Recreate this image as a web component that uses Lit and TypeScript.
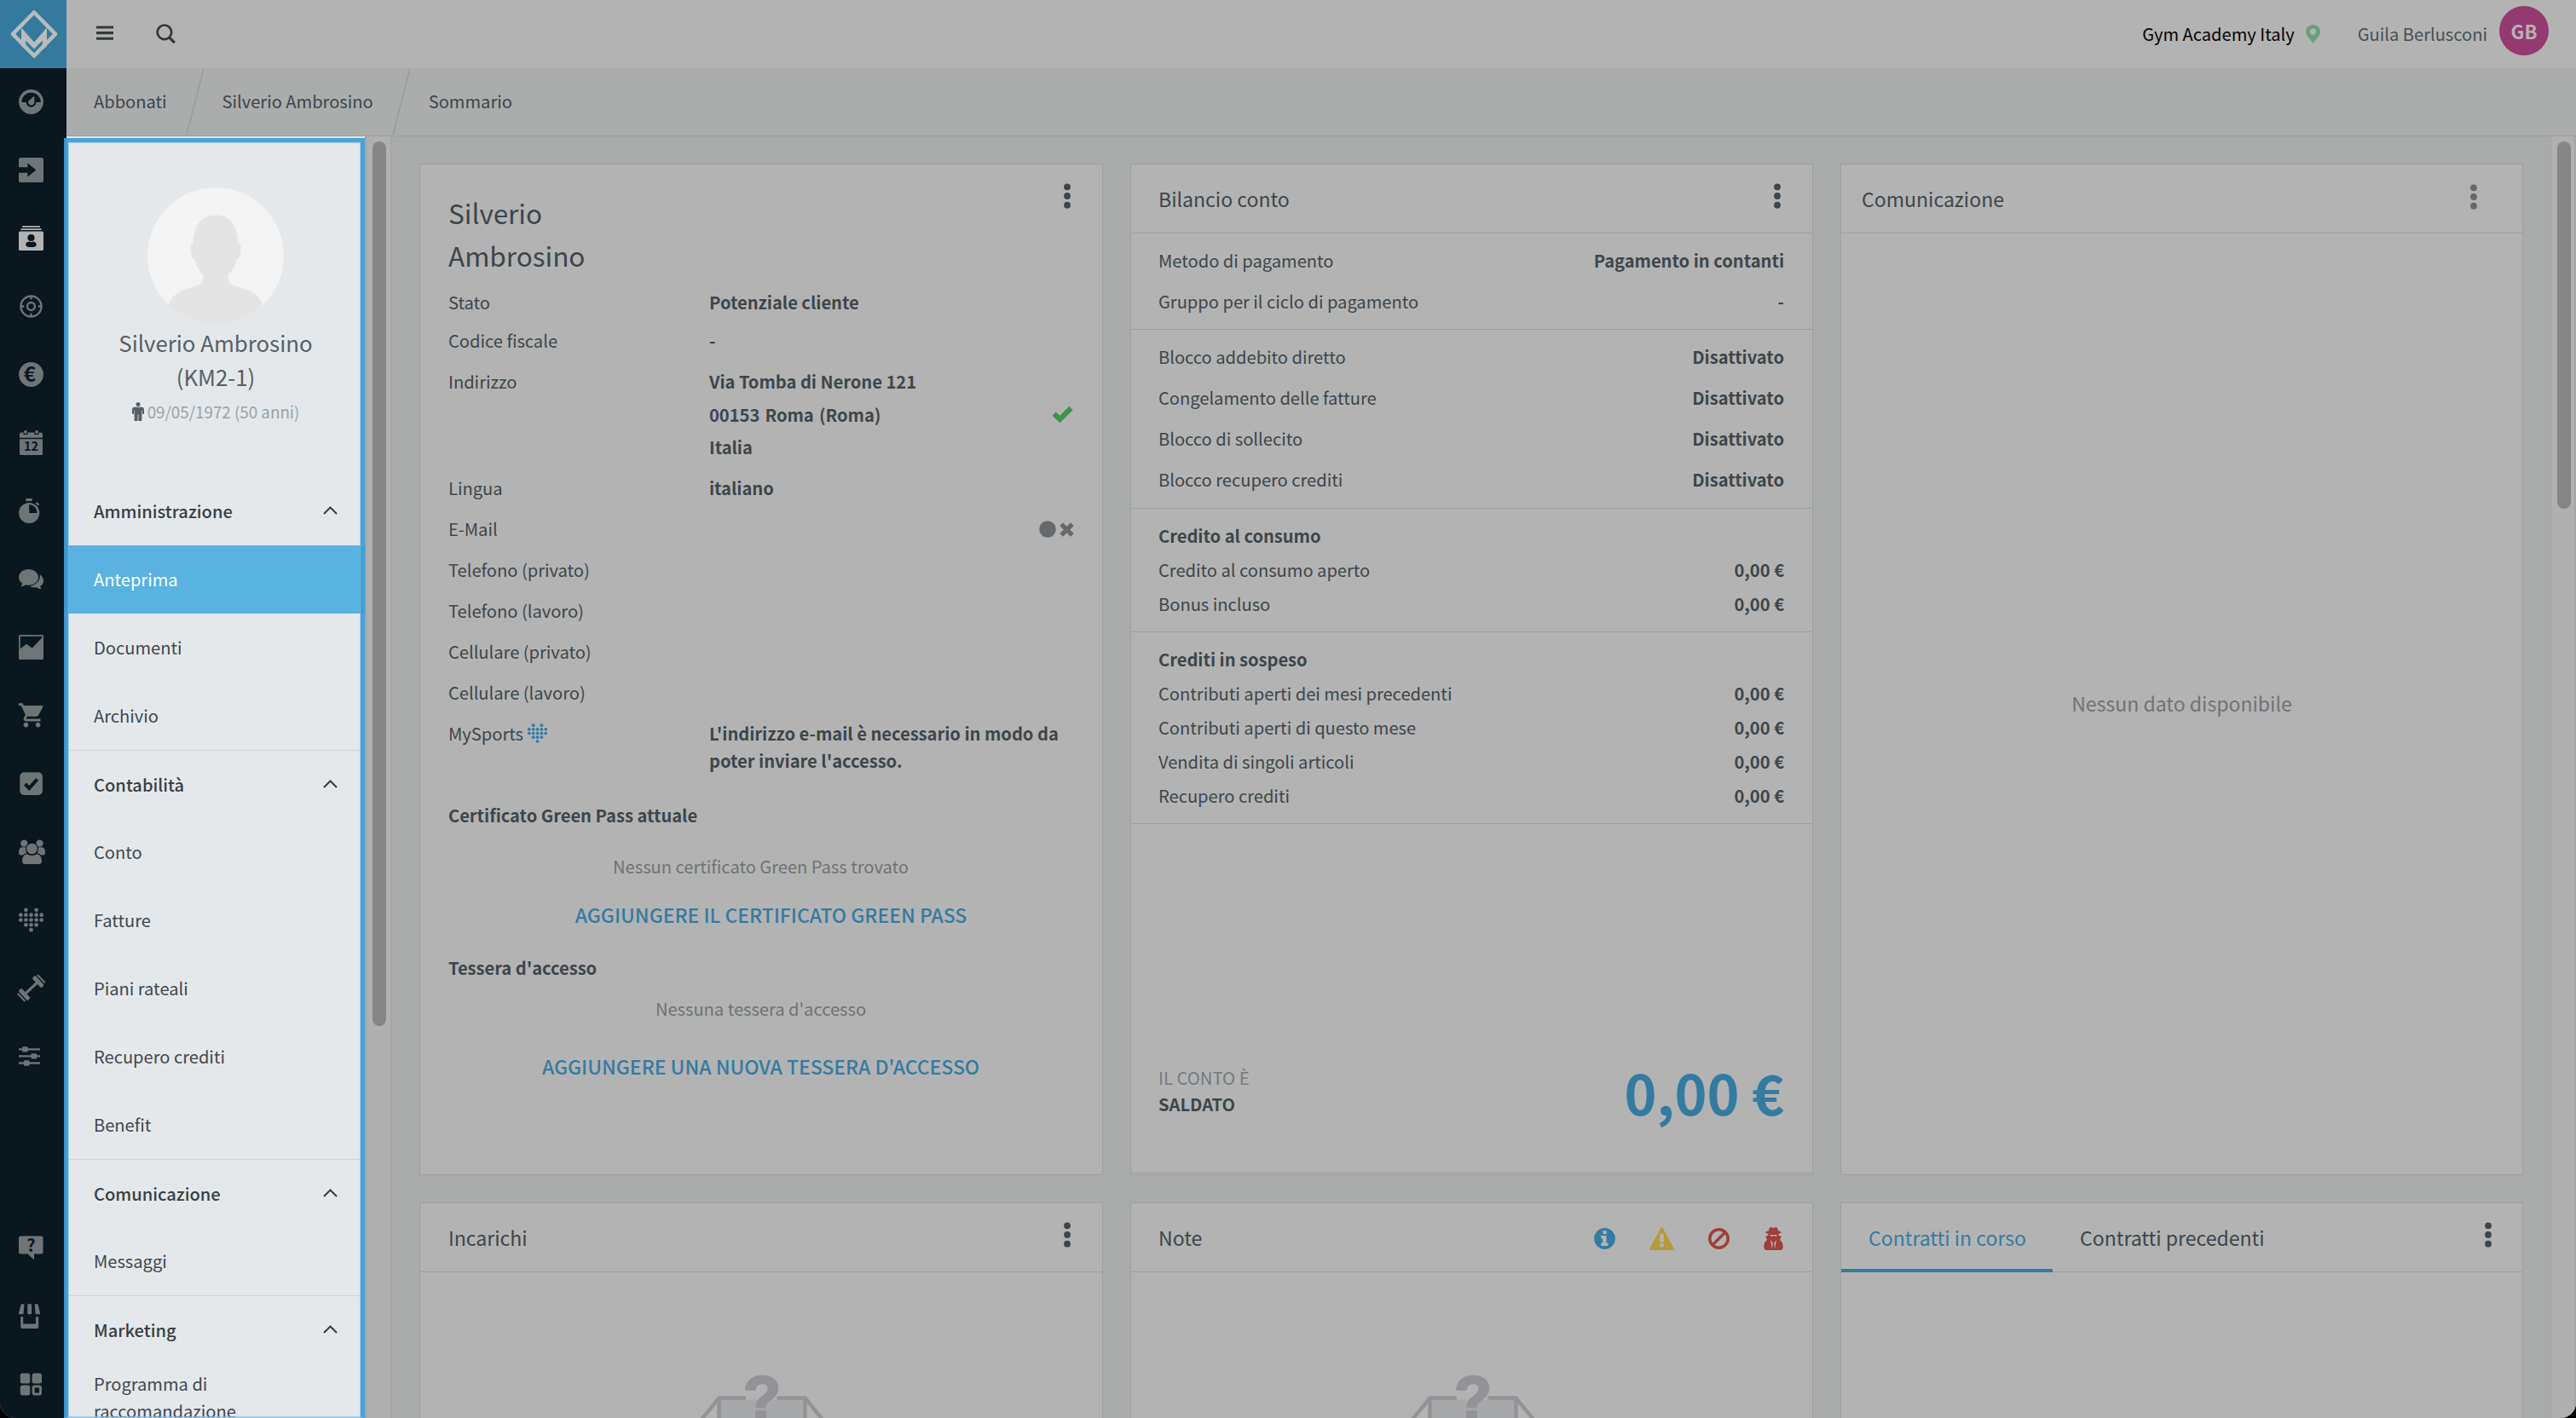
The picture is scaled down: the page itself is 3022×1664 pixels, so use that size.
import { LitElement, html, svg, css } from "lit";
import { customElement, property } from "lit/decorators.js";

const HEART_DOTS: [number, number][] = [
  [1, 0], [3, 0],
  [0, 1], [1, 1], [2, 1], [3, 1], [4, 1],
  [0, 2], [1, 2], [2, 2], [3, 2], [4, 2],
  [1, 3], [2, 3], [3, 3],
  [2, 4],
];

const heart = () => svg`${HEART_DOTS.map(
  ([c, r]) => svg`<circle cx=${2.3 + c * 6.1} cy=${2.8 + r * 5.85} r="2.35"/>`
)}`;

const RAIL_ICONS: Record<string, unknown> = {
  dashboard: svg`<circle cx="14.5" cy="14.5" r="14.4"/>
    <path class="cut" d="M3.3 15a11.2 11.2 0 0 1 22.4 0h-5.4a5.8 5.8 0 0 1-11.6 0z"/>
    <path d="M18.3 7.4v7.6a3.6 3.6 0 1 1-6.9-1.5z"/>`,
  checkin: svg`<rect width="29" height="29" rx="2.6"/>
    <path class="cut" d="M0 11.2h10.4V6.4l10 8.1-10 8.1v-4.8H0z"/>`,
  members: svg`<rect y="6.6" width="29" height="22.4" rx="1.6"/>
    <rect x="4" y="0" width="21" height="1.7" rx=".6"/><rect x="2.4" y="3.2" width="24.2" height="1.8" rx=".6"/>
    <circle class="cut" cx="14.5" cy="14" r="4.1"/>
    <path class="cut" d="M8.2 22.2c0-2.6 3-3.7 4.4-3.6l1.9.7 1.9-.7c1.4-.1 4.4 1 4.4 3.6 0 1.900-2.900 2.900-6.300 2.900s-6.300-1-6.300-2.900z"/>`,
  target: svg`<g class="line" stroke-width="2.4"><circle cx="14.5" cy="14.5" r="12"/><circle cx="14.5" cy="14.500" r="4.500"/>
    <path d="M14.500 2v4.300M14.500 22.700v4.300M2 14.500h4.300M22.700 14.500H27"/></g>`,
  euro: svg`<circle cx="14.500" cy="14.500" r="14.400"/><text class="cut euro" x="12.800" y="22.700">€</text>`,
  calendar: svg`<path d="M1 4.500A2 2 0 0 1 3 2.500h2.500V5h5V2.500h8V5h5V2.500H26a2 2 0 0 1 2 2v4.300H1z"/>
    <rect x="6.300" width="3.200" height="3.800" rx="1.200"/><rect x="19.500" width="3.200" height="3.800" rx="1.200"/>
    <path d="M1 10.200h27v17.300a1.500 1.500 0 0 1-1.500 1.500h-24A1.500 1.500 0 0 1 1 27.500z"/>
    <text class="cut day" x="14.500" y="24.400">12</text>`,
  timer: svg`<circle cx="12.200" cy="17" r="12.100"/><rect x="8.200" y="0" width="7.600" height="3" rx="1"/>
    <path class="cut" d="M12.200 16.900V7a9.900 9.900 0 0 1 9.400 9.900z"/>
    <path class="line" stroke-width="2.200" d="M20.500 4.800l3 3"/>`,
  chat: svg`<path d="M11.500 3C5.200 3 0 7.200 0 12.600c0 3 1.700 5.500 4.200 7.200-.4 1.500-1.200 2.500-2.200 3.500 2.400-.1 4.600-.8 6.300-2 1 .2 2.100.4 3.200.4C17.800 21.700 23 17.800 23 12.500S17.800 3 11.500 3z"/>
    <path d="M24.800 9.300c.9 5.700-3.200 12-11.600 13.700 1.600 1.100 4.300 1.700 7.300 1.300 1.900 1.200 4 1.900 6.300 1.900-.8-.8-1.400-1.800-1.800-2.900 2.400-1.400 4-3.500 4-6.200 0-3.500-1.600-6-4.200-7.800z"/>`,
  chart: svg`<path fill-rule="evenodd" d="M1.500 0h26A1.500 1.500 0 0 1 29 1.500v26a1.500 1.500 0 0 1-1.500 1.500h-26A1.500 1.500 0 0 1 0 27.500v-26A1.500 1.500 0 0 1 1.500 0zM1.700 1.700v14.600l7.400-5.600 6.600 4.700L27.300 3.300V1.700z"/>`,
  cart: svg`<g transform="translate(-1.500 -2.700) scale(1.420)"><path d="M7 18c-1.100 0-2 .9-2 2s.9 2 2 2 2-.9 2-2-.9-2-2-2zM1 2v2h2l3.600 7.590-1.350 2.450c-.16.280-.25.610-.25.960 0 1.100.9 2 2 2h12v-2H7.420c-.14 0-.25-.11-.25-.25l.03-.12.9-1.630h7.450c.75 0 1.410-.41 1.750-1.030l3.580-6.490c.08-.14.12-.31.12-.48 0-.55-.45-1-1-1H5.210l-.94-2H1zm16 16c-1.100 0-2 .9-2 2s.9 2 2 2 2-.9 2-2-.9-2-2-2z"/></g>`,
  tasks: svg`<rect x="1.300" y="1.300" width="26.600" height="26.600" rx="5"/>
    <path class="cutline" stroke-width="4" d="M7.500 15l4.800 5 9.300-10.600"/>`,
  group: svg`<circle cx="6.300" cy="4.600" r="4.200"/><circle cx="24.500" cy="4.600" r="4.200"/>
    <path d="M3.500 9.300h4.200c.3 0 .8.200 1 .5-.5 3.500 0 6 1.800 8.700H2.500C.8 18.500 0 17.300 0 16c0-2.500.6-6.700 3.500-6.700zM27.500 9.300h-4.200c-.3 0-.8.200-1 .5.500 3.500 0 6-1.800 8.700h8c1.700 0 2.500-1.200 2.500-2.500 0-2.500-.6-6.700-3.500-6.700z"/>
    <circle class="cut" cx="15.500" cy="11" r="7.400"/><circle cx="15.500" cy="11" r="6.300"/>
    <path class="cutline" stroke-width="2" d="M10 17.200c-3 0-6 2.300-6 8.800 0 2 1.500 3 3.500 3h16c2 0 3.500-1 3.500-3 0-6.500-3-8.800-6-8.800-3 2-8 2-11 0z"/>
    <path d="M10 17.200c-3 0-6 2.300-6 8.800 0 2 1.500 3 3.500 3h16c2 0 3.500-1 3.500-3 0-6.500-3-8.800-6-8.800-3 2-8 2-11 0z"/>`,
  heart: heart(),
  dumbbell: svg`<g transform="rotate(-43 14.700 14.500)"><rect x="4" y="12.900" width="21" height="3.200"/>
    <rect x="1.200" y="6.600" width="5" height="15.800" rx="1.500"/><rect x="-2.300" y="8" width="2.100" height="13" rx="1"/>
    <rect x="23.200" y="6.600" width="5" height="15.800" rx="1.500"/><rect x="29.600" y="8" width="2.100" height="13" rx="1"/></g>`,
  sliders: svg`<path class="line" stroke-width="2.400" d="M0 6.400h25M0 14.400h25M0 22.500h25"/>
    <rect x="4" y="3.200" width="6.600" height="6.400" rx="1"/><rect x="14.500" y="11.200" width="6.600" height="6.400" rx="1"/><rect x="6" y="19.300" width="6.600" height="6.400" rx="1"/>`,
  help: svg`<path d="M2.500.5H26A2.500 2.500 0 0 1 28.500 3v16a2.500 2.500 0 0 1-2.500 2.500h-8v7l-7.500-7h-8A2.500 2.500 0 0 1 0 19V3A2.500 2.500 0 0 1 2.500.5z"/>
    <text class="cut q" x="14.300" y="18.800">?</text>`,
  shop: svg`<path d="M2.700.300h3.800L5.700 11a1.200 1.200 0 0 1-1.200 1.200H1A1 1 0 0 1 0 11zM10.300.300h4.800V11a1.200 1.200 0 0 1-1.200 1.200h-2.400a1.200 1.200 0 0 1-1.200-1.200zM18.700.300h3.800l2.500 10.700a1 1 0 0 1-1 1.200h-3.300A1.200 1.200 0 0 1 19.500 11z"/>
    <path d="M2.200 15.300h3v8.300H20v-8.300h3.200v12a1.700 1.700 0 0 1-1.700 1.700H3.900a1.700 1.700 0 0 1-1.700-1.700z"/>`,
  apps: svg`<rect x="1.800" y="1.500" width="11.400" height="12" rx="2.500"/><rect x="15.600" y="1.500" width="11.400" height="12" rx="2.500"/>
    <rect x="1.800" y="15.600" width="11.400" height="11.800" rx="2.500"/><rect class="line" stroke-width="3" x="17.100" y="17.100" width="8.400" height="8.800" rx="1.500"/>`,
};

const FONT = css`"Noto Sans CJK JP", "Open Sans", sans-serif`;

@customElement("rail-icon")
export class RailIcon extends LitElement {
  @property() name = "";
  static styles = css`
    :host { display: block; width: 29px; height: 29px; color: #6f7477; }
    :host([active]) { color: #b3b4b4; }
    svg { display: block; overflow: visible; fill: currentColor; }
    .cut { fill: #0b171e; }
    .cutline { fill: none; stroke: #0b171e; }
    .line { fill: none; stroke: currentColor; }
    text { font-family: ${FONT}; font-weight: 700; text-anchor: middle; }
    .euro { font-size: 24px; }
    .day { font-size: 14.5px; }
    .q { font-size: 20px; }
  `;
  render() {
    return html`<svg width="29" height="29" viewBox="0 0 29 29">${RAIL_ICONS[this.name]}</svg>`;
  }
}

@customElement("kebab-menu")
export class KebabMenu extends LitElement {
  static styles = css`
    :host { display: block; color: #3c464c; }
    svg { display: block; fill: currentColor; }
  `;
  render() {
    return html`<svg width="8" height="30" viewBox="0 0 8 30">
      <circle cx="4" cy="4.300" r="3.900"/><circle cx="4" cy="15" r="3.900"/><circle cx="4" cy="25.700" r="3.900"/>
    </svg>`;
  }
}

@customElement("empty-box")
export class EmptyBox extends LitElement {
  static styles = css`
    :host { display: block; }
    svg { display: block; overflow: visible; }
    .fill { fill: #a7a8aa; }
    .line { fill: none; stroke: #929396; stroke-width: 4.4; stroke-linecap: round; stroke-linejoin: round; }
    text { font: 700 72px "Liberation Sans", sans-serif; fill: #929396; stroke: #929396; stroke-width: 2.6; text-anchor: middle; }
  `;
  render() {
    return html`<svg width="160" height="56" viewBox="0 0 160 56">
      <path class="fill" d="M29 30.500h102V56H29z"/>
      <path class="line" d="M59 28.500H29.500L4 60M29.500 28.500V60M99 28.500h31.500L156 60M130.500 28.500V60"/>
      <text x="80" y="53.500">?</text>
    </svg>`;
  }
}

type Section = { title: string; items: { label: string; active?: boolean; tall?: boolean }[] };

const SECTIONS: Section[] = [
  { title: "Amministrazione", items: [{ label: "Anteprima", active: true }, { label: "Documenti" }, { label: "Archivio" }] },
  { title: "Contabilità", items: [{ label: "Conto" }, { label: "Fatture" }, { label: "Piani rateali" }, { label: "Recupero crediti" }, { label: "Benefit" }] },
  { title: "Comunicazione", items: [{ label: "Messaggi" }] },
  { title: "Marketing", items: [{ label: "Programma di raccomandazione", tall: true }] },
];

const RAIL_TOP = ["dashboard", "checkin", "members", "target", "euro", "calendar", "timer", "chat", "chart", "cart", "tasks", "group", "heart", "dumbbell", "sliders"];
const RAIL_BOTTOM = ["help", "shop", "apps"];

const BALANCE: { title?: string; rows: [string, string][] }[] = [
  { rows: [["Metodo di pagamento", "Pagamento in contanti"], ["Gruppo per il ciclo di pagamento", "-"]] },
  { rows: [["Blocco addebito diretto", "Disattivato"], ["Congelamento delle fatture", "Disattivato"], ["Blocco di sollecito", "Disattivato"], ["Blocco recupero crediti", "Disattivato"]] },
  { title: "Credito al consumo", rows: [["Credito al consumo aperto", "0,00 €"], ["Bonus incluso", "0,00 €"]] },
  { title: "Crediti in sospeso", rows: [["Contributi aperti dei mesi precedenti", "0,00 €"], ["Contributi aperti di questo mese", "0,00 €"], ["Vendita di singoli articoli", "0,00 €"], ["Recupero crediti", "0,00 €"]] },
];

@customElement("app-root")
export class AppRoot extends LitElement {
  static styles = css`
    :host {
      display: block; width: 3022px; height: 1664px; overflow: hidden; background: #000;
      font: 400 20.1px/32px ${FONT}; color: #3c464c;
    }
    * { box-sizing: border-box; }
    svg { display: block; }
    .app { display: flex; height: 1664px; border-radius: 0 0 18px 18px; overflow: hidden; background: #a9acab; }
    .rail { width: 78px; flex: none; display: flex; flex-direction: column; background: #0b171e; }
    .logo { height: 80px; background: #347a9e; }
    .cell { height: 80px; display: flex; align-items: center; padding: 0 0 1px 22px; flex: none; }
    .spacer { flex: 1; }
    .spacer ~ .cell { padding-bottom: 0; padding-top: 1px; }
    .main { flex: 1; display: flex; flex-direction: column; min-width: 0; }

    .topbar { height: 80px; flex: none; background: #b3b3b3; display: flex; align-items: center; padding: 0 32px 0 35px; }
    .burger { margin-right: 50px; }
    .gym { color: #050505; margin-right: 13px; }
    .pin { margin-right: 44px; }
    .user { color: #475157; margin-right: 14px; }
    .avatar { width: 58px; height: 58px; border-radius: 50%; background: #943a70; color: #bcb0b7; font-weight: 700; font-size: 22px;
      display: flex; align-items: center; justify-content: center; margin-bottom: 8px; }
    .crumbs { height: 80px; flex: none; background: #abadac; border-bottom: 1px solid #9b9fa0; display: flex; align-items: center; padding: 0 0 2px 32px; }
    .sep { margin: 0 21px 0 22px; }

    .body { flex: 1; display: flex; min-height: 0; }
    .side { width: 350px; flex: none; background: #e4e8eb; position: relative; z-index: 1; }
    .frame { position: absolute; left: -3px; top: 2px; width: 353px; height: 1502px; border: 5px solid rgba(66, 158, 214, .94);
      border-bottom: 1px solid #8cc3e2; box-shadow: inset 0 0 0 1px rgba(120, 190, 230, .55); z-index: 2; }
    .profile { display: flex; flex-direction: column; align-items: center; height: 400px; padding-top: 60px; }
    .name { margin-top: 2px; font-size: 25.8px; line-height: 40px; text-align: center; color: #556067; }
    .born { display: flex; align-items: center; gap: 4px; height: 42px; font-size: 18.8px; color: #98a3a8; }
    .section + .section { border-top: 1px solid #ced4d7; }
    .head { height: 80px; display: flex; align-items: center; justify-content: space-between; padding: 0 32px; font-weight: 500; color: #373f43; }
    .section + .section .head { height: 79px; padding-top: 1px; }
    .chev { margin-bottom: 2px; }
    .item { height: 80px; display: flex; align-items: center; padding: 0 32px; color: #40494e; }
    .item.active { background: #59b2e0; color: #fff; width: 351px; }
    .item.tall { align-items: flex-start; padding-top: 8px; padding-right: 100px; }

    .track { width: 30px; flex: none; background: #b0b0b0; border-right: 2px solid #a3a6a6; border-left: 1px solid #a1a5a5; padding: 6px 0 0 7px; }
    .track.left { width: 32px; border-left: 2px solid #a1a4a5; }
    .thumb { width: 16px; border-radius: 8px; background: #858585; height: 1038px; }
    .track.right .thumb { height: 431px; }

    .content { flex: 1; display: grid; grid-template-columns: 802px 801px 801px; grid-template-rows: 1187px 1187px; gap: 32px; padding: 32px; overflow: hidden; }
    .card { background: #b3b3b3; border: 1px solid #9b9fa1; }
    .title { height: 81px; border-bottom: 1px solid #999ea0; display: flex; align-items: center; justify-content: space-between;
      padding: 0 37px 1px 32px; font-size: 23.05px; }
    .low .title { padding-bottom: 0; }
    .card.first .title, .person { padding-left: 33px; }
    .title kebab-menu { margin-bottom: 6px; }

    .person { padding-right: 34px; }
    .top { display: flex; justify-content: space-between; padding: 31px 3px 0 0; }
    .top .big { font-size: 31.5px; line-height: 50px; width: 200px; margin-bottom: 8px; }
    .top kebab-menu { margin-top: -9px; }
    .row { display: grid; grid-template-columns: 306px 1fr auto; align-items: center; height: 48px; }
    .row.s { height: 45px; }
    .row.addr { height: 127px; align-items: start; padding-top: 7px; line-height: 38.6px; }
    .row.sports { height: 72px; align-items: start; padding-top: 8px; }
    .check { align-self: start; margin-top: 47px; }
    .status { display: flex; gap: 4px; align-items: center; margin-right: -1px; }
    .my { display: flex; gap: 5px; }
    .my svg { margin-top: 4px; }
    b { font-weight: 700; }
    .zip { word-spacing: 1.6px; }
    .sub { font-weight: 700; margin-top: 32px; }
    .sub.second { margin-top: 31px; }
    .none { text-align: center; color: #6e7376; margin-top: 28px; }
    .none.second { margin-top: 16px; }
    .link { text-align: center; font-size: 22.95px; font-weight: 500; color: #347ba2; margin-top: 24px; padding-left: 24px; }
    .link.second { margin-top: 35px; padding-left: 0; }

    .balance { display: flex; flex-direction: column; }
    .group { border-bottom: 1px solid #999ea0; padding: 8px 33px 8px 32px; }
    .group .line { display: flex; justify-content: space-between; align-items: center; height: 48px; }
    .g1 { padding-bottom: 9px; }
    .g2, .g3 { padding: 12px 33px 12px 32px; }
    .g2 .line, .g3 .line { height: 40px; }
    .total { flex: 1; border-bottom: 1px solid #999ea0; margin-bottom: 1px; display: flex; align-items: flex-end; justify-content: space-between; padding: 0 33px 64px 32px; }
    .il { color: #757b7f; font-size: 20.3px; }
    .amount { font-size: 64.4px; line-height: 64px; font-weight: 700; color: #347ba2; margin-bottom: -1px; }

    .comm { display: flex; flex-direction: column; }
    .comm .title { padding-left: 24px; padding-right: 53px; }
    .comm kebab-menu { color: #64696c; margin-bottom: 4px; }
    .nodata { flex: 1; display: flex; align-items: center; justify-content: center; font-size: 23.05px; color: #6f7477; padding-bottom: 3px; }
    .icons { display: flex; align-items: center; gap: 40px; margin-right: -3px; padding-top: 3px; }
    .tabs { padding: 0 37px 0 0; }
    .low .tabs { padding-right: 36px; }
    .tabset { display: flex; align-self: stretch; white-space: nowrap; }
    .tab { padding: 24px 32px 0 32px; height: 81px; }
    .tab.on { color: #347ba2; border-bottom: 4px solid #347ba2; width: 248px; }
    .boxwrap { display: flex; justify-content: center; padding: 119px 0 0 2px; }
  `;

  private renderRail() {
    return html`<nav class="rail">
      <div class="logo"><svg width="78" height="80" viewBox="0 0 78 80">
        <path d="M40 14.500L65 39.800 40 65.500 15 39.800z" fill="none" stroke="#b9bbbc" stroke-width="4.600" stroke-linejoin="round"/>
        <path d="M25 32.500L40 49.500 55 32.500V54L49.700 58.500V47.500L40 57.500 30.300 47.500V58.500L25 54z" fill="#b9bbbc"/>
      </svg></div>
      ${RAIL_TOP.map((n) => html`<div class="cell"><rail-icon name=${n} ?active=${n === "members"}></rail-icon></div>`)}
      <div class="spacer"></div>
      ${RAIL_BOTTOM.map((n) => html`<div class="cell"><rail-icon name=${n}></rail-icon></div>`)}
    </nav>`;
  }

  private renderTop() {
    const slash = html`<svg class="sep" width="22" height="78" viewBox="0 0 22 78"><path d="M21 0L1 78" stroke="#9b9ea0" stroke-width="1.700" fill="none"/></svg>`;
    return html`<header class="topbar">
        <svg class="burger" width="20" height="20" viewBox="0 0 20 20"><path d="M0 2h20M0 8.600h20M0 15.200h20" stroke="#33383b" stroke-width="3.100"/></svg>
        <svg width="24" height="24" viewBox="0 0 24 24"><g fill="none" stroke="#33383b" stroke-width="2.700"><circle cx="9.900" cy="9.800" r="8.300"/><path d="M15.500 15.800l6.300 6.300" stroke-width="3.300"/></g></svg>
        <div class="spacer"></div>
        <span class="gym">Gym Academy Italy</span>
        <svg class="pin" width="17" height="22" viewBox="0 0 17 22"><path fill="#68a07b" fill-rule="evenodd" d="M8.500 0C3.800 0 0 3.600 0 8.200 0 13.500 5 16.500 8.500 22 12 16.500 17 13.500 17 8.200 17 3.600 13.200 0 8.500 0zm0 4.600a3.400 3.600 0 1 1 0 7.200 3.400 3.600 0 0 1 0-7.200z"/></svg>
        <span class="user">Guila Berlusconi</span>
        <div class="avatar">GB</div>
      </header>
      <div class="crumbs"><span>Abbonati</span>${slash}<span>Silverio Ambrosino</span>${slash}<span>Sommario</span></div>`;
  }

  private renderSide() {
    return html`<aside class="side">
      <div class="profile">
        <svg width="160" height="160" viewBox="0 0 160 160">
          <clipPath id="round"><circle cx="80" cy="80" r="80"/></clipPath>
          <circle cx="80" cy="80" r="80" fill="#f3f3f3"/>
          <path clip-path="url(#round)" fill="#e4e4e4" d="M80 32.500C63 32.500 54 45 53.600 66c-3 0-3.600 2-3 8 .6 7 2 10 4.800 10 1.500 9 5.500 14 10.100 18 0 5-.6 8-2.100 10.500C56 117 44 119 36 123.500 30 127 26.500 132 25 139V160h110v-21c-1.500-7-5-12-11-15.500-8-4.500-20-6.500-27.400-11-1.500-2.500-2.100-5.500-2.100-10.500 4.600-4 8.600-9 10.100-18 2.800 0 4.200-3 4.800-10 .6-6 0-8-3-8C106 45 97 32.500 80 32.500z"/>
        </svg>
        <div class="name">Silverio Ambrosino<br>(KM2-1)</div>
        <div class="born">
          <svg width="14" height="22" viewBox="0 0 14 22" fill="#566067"><circle cx="7" cy="2.500" r="2.500"/><path d="M3 5.800h8a3 3 0 0 1 3 3V13a1 1 0 0 1-2 .2V9.500h-.6V21a1.300 1.300 0 0 1-1.900 1H8.200a1 1 0 0 1-.8-1v-6.500h-.8V21a1 1 0 0 1-.8 1H4.500a1.300 1.300 0 0 1-1.900-1V9.500H2v3.700A1 1 0 0 1 0 13V8.800a3 3 0 0 1 3-3z"/></svg>
          <span>09/05/1972 (50 anni)</span>
        </div>
      </div>
      ${SECTIONS.map((s) => html`<div class="section">
        <div class="head"><span>${s.title}</span>
          <svg class="chev" width="17" height="10" viewBox="0 0 17 10"><path d="M1 9L8.500 1.500 16 9" fill="none" stroke="#373f43" stroke-width="2"/></svg></div>
        ${s.items.map((i) => html`<div class="item ${i.active ? "active" : ""} ${i.tall ? "tall" : ""}">${i.label}</div>`)}
      </div>`)}
      <div class="frame"></div>
    </aside>`;
  }

  private renderPerson() {
    const row = (label: string, value: unknown = "", cls = "", end: unknown = "") =>
      html`<div class="row ${cls}"><span>${label}</span><b>${value}</b>${end}</div>`;
    return html`<section class="card person">
      <div class="top"><div class="big">Silverio Ambrosino</div><kebab-menu></kebab-menu></div>
      ${row("Stato", "Potenziale cliente", "s")}
      ${row("Codice fiscale", "-", "s")}
      ${row("Indirizzo", html`Via Tomba di Nerone <span>121</span><br><span class="zip">00153 Roma (Roma)</span><br>Italia`, "addr",
        html`<svg class="check" width="25" height="20" viewBox="0 0 25 20"><path d="M2.500 9.500L9.300 16 22.500 3" fill="none" stroke="#3f9448" stroke-width="6" stroke-linejoin="miter"/></svg>`)}
      ${row("Lingua", "italiano")}
      ${row("E-Mail", "", "", html`<span class="status"><svg width="20" height="20" viewBox="0 0 20 20"><circle cx="10" cy="10" r="9.800" fill="#66696b"/></svg>
        <svg width="17" height="17" viewBox="0 0 16 16"><path d="M2 2l12 12M14 2L2 14" stroke="#66696b" stroke-width="5"/></svg></span>`)}
      ${row("Telefono (privato)")}
      ${row("Telefono (lavoro)")}
      ${row("Cellulare (privato)")}
      ${row("Cellulare (lavoro)")}
      <div class="row sports"><span class="my">MySports <svg width="23" height="23" viewBox="0 0 29 29" fill="#347ba2">${heart()}</svg></span>
        <b>L'indirizzo e-mail è necessario in modo da<br>poter inviare l'accesso.</b></div>
      <div class="sub">Certificato Green Pass attuale</div>
      <div class="none">Nessun certificato Green Pass trovato</div>
      <div class="link">AGGIUNGERE IL CERTIFICATO GREEN PASS</div>
      <div class="sub second">Tessera d'accesso</div>
      <div class="none second">Nessuna tessera d'accesso</div>
      <div class="link second">AGGIUNGERE UNA NUOVA TESSERA D'ACCESSO</div>
    </section>`;
  }

  private renderBalance() {
    return html`<section class="card balance">
      <div class="title"><span>Bilancio conto</span><kebab-menu></kebab-menu></div>
      ${BALANCE.map((g, i) => html`<div class="group g${i}">
        ${g.title ? html`<div class="line"><b>${g.title}</b></div>` : ""}
        ${g.rows.map(([l, v]) => html`<div class="line"><span>${l}</span><b>${v}</b></div>`)}
      </div>`)}
      <div class="total"><div><div class="il">IL CONTO È</div><b>SALDATO</b></div><div class="amount">0,00 €</div></div>
    </section>`;
  }

  private renderNoteIcons() {
    return html`<div class="icons">
      <svg width="25" height="25" viewBox="0 0 25 25"><circle cx="12.500" cy="12.500" r="12.400" fill="#347ba2"/>
        <path fill="#b3b3b3" d="M10.400 3.200h4.200v3.700h-4.200zM8.200 9h6.300v8.600h2v3.300H8.200v-3.300h2v-5.300h-2z"/></svg>
      <svg width="29" height="27" viewBox="0 0 29 27"><path d="M14.500 1.300L27.700 25.700H1.300z" fill="#b39c37" stroke="#b39c37" stroke-width="2.400" stroke-linejoin="round"/>
        <path fill="#b3b3b3" d="M12.100 8.300h4.800v9.200h-4.800zM12.200 19.300h4.600v4h-4.600z"/></svg>
      <svg width="25" height="25" viewBox="0 0 25 25"><g fill="none" stroke="#a03e39"><circle cx="12.500" cy="12.500" r="10.700" stroke-width="3.500"/><path d="M5 20L20 5" stroke-width="3.300"/></g></svg>
      <svg width="23" height="27" viewBox="0 0 23 27"><path fill="#a03e39" d="M7.500.600C8.800-.200 10 1 11.500 1S14.200-.200 15.500.600c1 1 1.400 2.600 1.700 4 2 .3 3.600 1 3.600 1.600 0 .6-1.300 1.100-3.200 1.400l.1 2.700h3l-1.600 5c2.500 1.300 3.400 4 3.600 7.500.1 2.500-.8 4.200-2.700 4.200H3.200C1.300 27 .2 25.300.3 22.800c.2-3.500 1.300-6.200 3.600-7.500l-1.600-5h3l.1-2.700C3.500 7.300 2.200 6.800 2.200 6.200c0-.600 1.600-1.300 3.600-1.600.3-1.400.7-3 1.700-4z"/>
        <path fill="#b3b3b3" d="M7.300 9h3.500l.7.500.7-.5h3.500l-.8 1.800h-2.300l-1.100-.8-1.100.8H8.100zM8 15.300l2.700 3-.8 7.700zM15 15.300l-2.700 3 .8 7.700z"/></svg>
    </div>`;
  }

  render() {
    return html`<div class="app">
      ${this.renderRail()}
      <div class="main">
        ${this.renderTop()}
        <div class="body">
          ${this.renderSide()}
          <div class="track left"><div class="thumb"></div></div>
          <main class="content">
            ${this.renderPerson()}
            ${this.renderBalance()}
            <section class="card comm">
              <div class="title"><span>Comunicazione</span><kebab-menu></kebab-menu></div>
              <div class="nodata">Nessun dato disponibile</div>
            </section>
            <section class="card first low">
              <div class="title"><span>Incarichi</span><kebab-menu></kebab-menu></div>
              <div class="boxwrap"><empty-box></empty-box></div>
            </section>
            <section class="card low">
              <div class="title"><span>Note</span>${this.renderNoteIcons()}</div>
              <div class="boxwrap"><empty-box></empty-box></div>
            </section>
            <section class="card low">
              <div class="title tabs"><div class="tabset"><div class="tab on">Contratti in corso</div><div class="tab">Contratti precedenti</div></div><kebab-menu></kebab-menu></div>
            </section>
          </main>
          <div class="track right"><div class="thumb"></div></div>
        </div>
      </div>
    </div>`;
  }
}
